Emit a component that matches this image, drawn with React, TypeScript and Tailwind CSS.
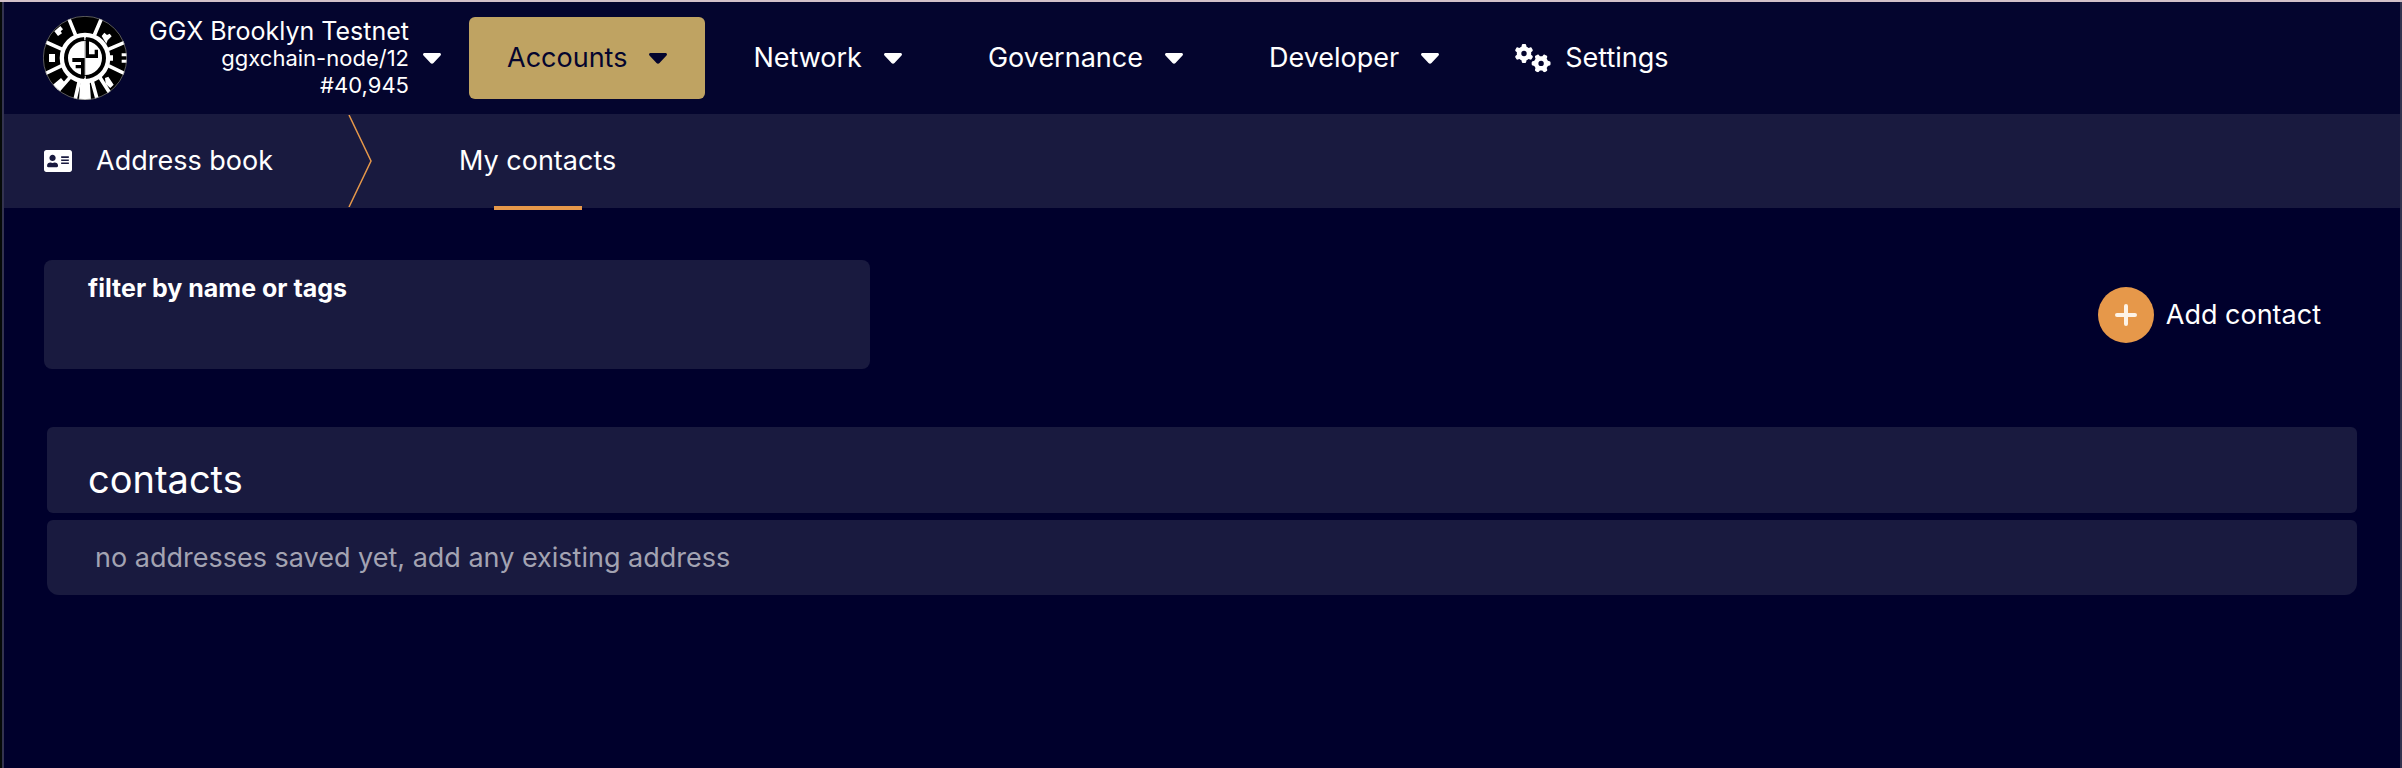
import React from "react";
import { FaAddressCard } from "react-icons/fa";
import { FaGears } from "react-icons/fa6";

function Caret() {
  return (
    <svg viewBox="0 0 18 11" className="h-[11px] w-[18px] shrink-0" fill="currentColor" aria-hidden="true">
      <path d="M1.500 0h15c1.300 0 2 1.500 1 2.500l-7 7.600c-.9.900-2.100.900-3 0l-7-7.600C-.5 1.500.2 0 1.500 0z" />
    </svg>
  );
}

function Logo() {
  return (
    <svg viewBox="0 0 252 252" className="size-[84px] shrink-0" role="img" aria-label="GGX">
      <defs>
        <clipPath id="disc">
          <circle cx="126" cy="126" r="126" />
        </clipPath>
      </defs>
      <g clipPath="url(#disc)">
        <rect width="252" height="252" fill="#000" />
        <g stroke="#fff" strokeWidth="11" fill="none">
          <path d="M76 4L98 58M177 4L154 58M0 74L58 100M0 176L58 148M252 76L194 101M252 176L194 148" />
          <path d="M46 224L88 176M96 252L110 190M163 252L146 190M206 240L168 180" />
        </g>
        <path
          fill="#fff"
          d="M112 196h28l4 56h-36zM18 114h18v24H18zM34 46l18-16 8 10-7 6 4 6-12 8zM30 206l24-20 12 14-22 24zM176 60l8-10 8 7 8-4 6 8-12 12-4 10zM186 186l10-4 16 24-10 10-14-12zM236 112h16v9h-16zM236 131h16v9h-16zM198 118h12v16h-12z"
        />
      </g>
      <circle cx="126" cy="126" r="76" fill="#fff" />
      <circle cx="126" cy="126" r="57" fill="none" stroke="#000" strokeWidth="12" />
      <path d="M126 56v16M126 180v16" stroke="#fff" strokeWidth="5" />
      <path d="M126 66v120" stroke="#777" strokeWidth="2" />
      <path fill="#000" d="M88 126h37v60h-11v-48H88zM98 147h20v10H98zM128 66h10v49h17v-14h10v25h-37z" />
      <circle cx="126" cy="126" r="125" fill="none" stroke="#888" strokeWidth="2" />
    </svg>
  );
}

const menu = ["Accounts", "Network", "Governance", "Developer"];

export default function App() {
  return (
    <div className="flex min-h-screen border-t-2 border-[#d3c1c9] bg-[#00002c] font-['Inter','Liberation_Sans',sans-serif] text-[27px] leading-9 text-white">
      <div className="w-0.5 shrink-0 bg-[#050a08]" />
      <div className="min-w-0 flex-1 border-x-2 border-[#33334f]">
        <header className="flex h-28 items-center bg-[#04052e] pl-[39px]">
          <Logo />
          <button type="button" className="ml-[22px] flex items-center gap-[14px] text-right">
            <span className="block">
              <span className="block text-[25px] leading-7">GGX Brooklyn Testnet</span>
              <span className="block text-[22px] leading-[27px]">ggxchain-node/12</span>
              <span className="block text-[22px] leading-[27px]">#40,945</span>
            </span>
            <Caret />
          </button>
          <nav className="ml-7 flex items-center gap-[10px]">
            {menu.map((name, i) => (
              <button
                key={name}
                type="button"
                className={`flex h-[82px] items-center gap-[22px] rounded-md px-[38px] ${i === 0 ? "bg-[#bfa362] text-[#04052e]" : ""}`}
              >
                {name}
                <Caret />
              </button>
            ))}
            <a href="#settings" className="flex items-center gap-[14px] pl-[28px]">
              <FaGears className="size-9" />
              Settings
            </a>
          </nav>
        </header>
        <div className="flex h-[94px] items-center bg-[#191a3f] pl-10">
          <FaAddressCard className="size-7" />
          <span className="ml-6">Address book</span>
          <svg viewBox="0 0 24 92" className="ml-[75px] h-[92px] w-6" fill="none" stroke="#e6984a" strokeWidth="1.500" aria-hidden="true">
            <path d="M1 0L23 46L1 92" />
          </svg>
          <a href="#contacts" className="relative ml-[87px] flex h-full items-center">
            My contacts
            <span className="absolute -bottom-0.5 left-1/2 h-1 w-[88px] -translate-x-1/2 bg-[#e6984a]" />
          </a>
        </div>
        <main className="px-[43px] pt-[52px]">
          <div className="-ml-[3px] flex items-center justify-between">
            <label className="block h-[109px] w-[826px] rounded-lg bg-[#191a3f] px-11 pt-3">
              <span className="block text-[25px] leading-8 font-bold">filter by name or tags</span>
              <input type="text" className="block h-12 w-full bg-transparent outline-none" />
            </label>
            <button type="button" className="mr-9 flex items-center gap-3">
              <span className="flex size-14 items-center justify-center rounded-full bg-[#e6984a]">
                <svg viewBox="0 0 24 24" className="size-6" stroke="#fdf3e7" strokeWidth="4" strokeLinecap="round" aria-hidden="true">
                  <path d="M12 3v18M3 12h18" />
                </svg>
              </span>
              Add contact
            </button>
          </div>
          <table className="mt-[58px] block w-full text-left">
            <thead className="block rounded-md bg-[#191a3f]">
              <tr className="block">
                <th className="block h-[86px] px-[41px] pt-[30px] text-[38px] leading-[44px] font-normal">contacts</th>
              </tr>
            </thead>
            <tbody className="mt-[7px] block rounded-t-md rounded-b-xl bg-[#191a3f]">
              <tr className="block">
                <td className="block h-[75px] px-12 py-5 text-[#a3a3b2]">no addresses saved yet, add any existing address</td>
              </tr>
            </tbody>
          </table>
        </main>
      </div>
    </div>
  );
}
